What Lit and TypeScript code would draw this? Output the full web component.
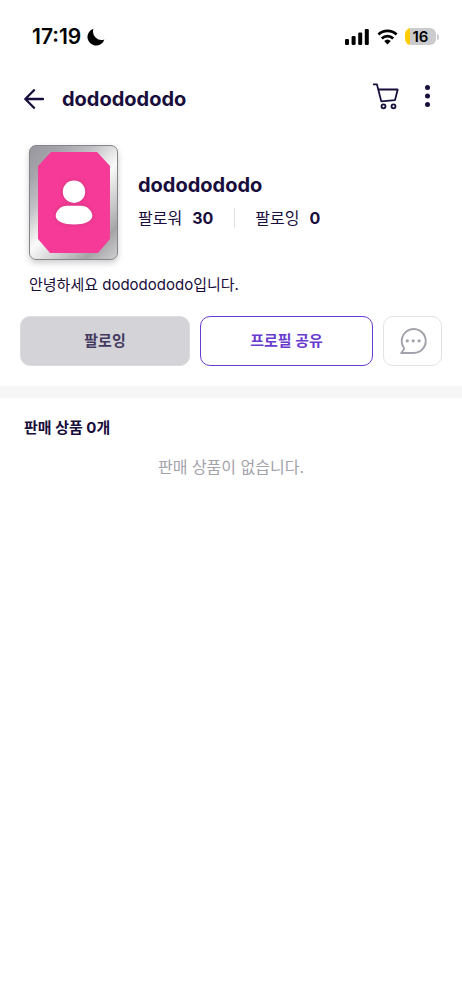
import { LitElement, html, css } from "lit";
import { customElement, property } from "lit/decorators.js";

@customElement("status-bar")
class StatusBar extends LitElement {
  static styles = css`
    :host { display: flex; align-items: center; justify-content: space-between; height: 73px; padding: 0 23px 0 32px; box-sizing: border-box; color: #000; }
    .side { display: flex; align-items: center; gap: 6px; }
    .icons { gap: 7px; }
    .time { font-size: 21px; line-height: 24px; font-weight: 600; }
    .battery { display: flex; align-items: center; gap: 1px; }
    .level { width: 31px; height: 17px; border-radius: 6px; background: linear-gradient(90deg, #fc0 5px, #cbcbcd 5px); font-size: 15px; line-height: 17px; font-weight: 600; text-align: center; }
    .tip { width: 2px; height: 6px; border-radius: 0 2px 2px 0; background: #cbcbcd; }
    svg { display: block; }
  `;
  render() {
    return html`
      <div class="side">
        <span class="time">17:19</span>
        <svg width="18" height="18" viewBox="0 0 18 18" aria-hidden="true"><path d="M6.400.8A8.600 8.600 0 1 0 17.300 11.500 8.600 8.600 0 0 1 6.400.8Z" fill="#000" /></svg>
      </div>
      <div class="side icons">
        <svg width="25" height="16" viewBox="0 0 25 16" aria-hidden="true"><rect x="0" y="10" width="4" height="6" rx="1.300" /><rect x="6.600" y="7" width="4" height="9" rx="1.300" /><rect x="13.200" y="3.500" width="4" height="12.500" rx="1.300" /><rect x="19.800" y="0" width="4" height="16" rx="1.300" /></svg>
        <svg width="21" height="16" viewBox="0 0 21 16" aria-hidden="true"><path d="M1.400 5.600a13.200 13.200 0 0 1 18.200 0M4.800 9.400a8.300 8.300 0 0 1 11.400 0" fill="none" stroke="#000" stroke-width="2.800" /><path d="M10.500 15.500 7.200 12.100a4.800 4.800 0 0 1 6.600 0Z" /></svg>
        <div class="battery"><span class="level">16</span><span class="tip"></span></div>
      </div>
    `;
  }
}

@customElement("app-bar")
class AppBar extends LitElement {
  @property() heading = "";
  static styles = css`
    :host { display: flex; align-items: center; height: 51px; padding: 0 26px 0 24px; box-sizing: border-box; }
    button { border: 0; padding: 0; background: none; color: inherit; cursor: pointer; }
    svg { display: block; }
    h1 { flex: 1; margin: 0 0 0 18px; font-size: 20px; line-height: 28px; font-weight: 700; }
    .tools { display: flex; gap: 20px; margin-bottom: 6px; }
  `;
  render() {
    return html`
      <button aria-label="뒤로"><svg width="20" height="20" viewBox="0 0 20 20" fill="none" stroke="currentColor" stroke-width="2.300" stroke-linecap="round" stroke-linejoin="round"><path d="M19 10H1.500M10 1.200 1.300 10l8.700 8.800" /></svg></button>
      <h1>${this.heading}</h1>
      <div class="tools">
        <button aria-label="장바구니"><svg width="28" height="28" viewBox="0 0 28 28" fill="none" stroke="currentColor" stroke-width="1.800" stroke-linejoin="round"><path d="M1 2.300h3.900l4.400 17.100 13.700-1.300 2.700-10.600H6.200" /><circle cx="11.500" cy="24.300" r="2" /><circle cx="21.500" cy="24.300" r="2" /></svg></button>
        <button aria-label="더보기"><svg width="16" height="24" viewBox="0 0 16 24" fill="currentColor"><circle cx="7.500" cy="3.400" r="2.500" /><circle cx="7.500" cy="12" r="2.500" /><circle cx="7.500" cy="20.600" r="2.500" /></svg></button>
      </div>
    `;
  }
}

@customElement("profile-card")
class ProfileCard extends LitElement {
  @property() name = "";
  @property({ type: Number }) followers = 0;
  @property({ type: Number }) following = 0;
  static styles = css`
    :host { display: block; padding: 21px 20px 20px; }
    .top { display: flex; gap: 20px; padding: 0 9px; }
    .avatar { display: flex; align-items: center; justify-content: center; width: 89px; height: 115px; box-sizing: border-box; border: 1px solid #858589; border-radius: 7px; background: linear-gradient(135deg, #98979f 0%, #a5a4ab 16%, #c0bfc4 32%, #dededf 42%, #fafafa 52%, #e0e0e1 62%, #c6c6c8 72%, #a5a5a8 84%, #cfcfd1 100%); box-shadow: 0 3px 6px #0003; }
    .avatar svg { display: block; }
    .person { filter: drop-shadow(0 0 2px #98205a66); }
    .info { padding-top: 26px; }
    h2 { margin: 0; font-size: 20px; line-height: 28px; font-weight: 700; }
    .stats { display: flex; align-items: center; margin: 8px 0 0; font-size: 16px; line-height: 22px; }
    .stat { display: flex; gap: 10px; }
    .stat + .stat { margin-left: 21px; padding-left: 20px; border-left: 1px solid #e2e2e5; line-height: 20px; }
    dt, dd { margin: 0; }
    dd { font-weight: 700; }
    .intro { margin: 13px 9px 0; font-size: 15px; line-height: 24px; }
    .actions { display: grid; grid-template-columns: 170fr 173fr 59px; gap: 10px; margin-top: 19px; }
    button { display: flex; align-items: center; justify-content: center; height: 50px; box-sizing: border-box; padding: 0 0 1px; border-radius: 10px; background: #fff; font: inherit; font-size: 15px; line-height: 22px; font-weight: 700; cursor: pointer; }
    .follow { border: 1px solid #dcdbdf; background: #d4d3d8; color: #443a60; }
    .share { border: 1px solid #693bce; color: #693bce; }
    .chat { border: 1px solid #e3e3e5; color: #a3a2ac; }
  `;
  render() {
    return html`
      <div class="top">
        <div class="avatar">
          <svg width="72" height="101" viewBox="0 0 72 101" role="img" aria-label="프로필 사진">
            <path d="M13 0h46l13 14v73l-12 14H12L0 87V14Z" fill="#f53b97" />
            <g class="person" fill="#fff"><circle cx="36" cy="39.700" r="11.200" /><path d="M29 53.800h14c6.200 0 11.300 5 11.300 10.200 0 5-8 8.500-18.300 8.500s-18.300-3.500-18.300-8.500c0-5.200 5.100-10.200 11.300-10.200Z" /></g>
          </svg>
        </div>
        <div class="info">
          <h2>${this.name}</h2>
          <dl class="stats">
            <div class="stat"><dt>팔로워</dt><dd>${this.followers}</dd></div>
            <div class="stat"><dt>팔로잉</dt><dd>${this.following}</dd></div>
          </dl>
        </div>
      </div>
      <p class="intro">안녕하세요 ${this.name}입니다.</p>
      <div class="actions">
        <button class="follow">팔로잉</button>
        <button class="share">프로필 공유</button>
        <button class="chat" aria-label="채팅"><svg width="28" height="28" viewBox="0 0 28 28" fill="none" stroke="currentColor" stroke-width="1.900" stroke-linejoin="round"><path d="M14.200 26H2.200l2.600-3.500c.4-.6.3-1.200-.1-1.900A12 12 0 1 1 14.200 26Z" /><g fill="currentColor" stroke="none"><circle cx="8.300" cy="13.800" r="1.600" /><circle cx="14.200" cy="13.800" r="1.600" /><circle cx="20.100" cy="13.800" r="1.600" /></g></svg></button>
      </div>
    `;
  }
}

@customElement("app-root")
class AppRoot extends LitElement {
  static styles = css`
    :host { display: block; min-height: 100vh; background: #fff; color: #180d3b; font-family: Inter, "Noto Sans CJK KR", sans-serif; }
    .products { border-top: 12px solid #f6f6f6; padding: 18px 24px; }
    h2 { margin: 0; font-size: 15px; line-height: 24px; font-weight: 700; }
    .empty { margin: 15px 0 0; color: #a3a2ab; font-size: 16px; line-height: 24px; text-align: center; }
  `;
  render() {
    const name = "dododododo";
    return html`
      <status-bar></status-bar>
      <app-bar heading=${name}></app-bar>
      <main>
        <profile-card name=${name} followers="30" following="0"></profile-card>
        <section class="products">
          <h2>판매 상품 0개</h2>
          <p class="empty">판매 상품이 없습니다.</p>
        </section>
      </main>
    `;
  }
}
